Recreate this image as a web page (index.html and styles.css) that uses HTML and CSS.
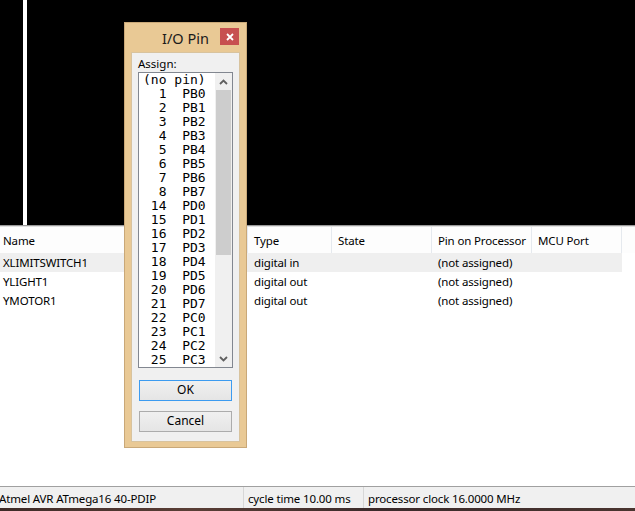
FILE: index.html
```html
<!DOCTYPE html>
<html>
<head>
<meta charset="utf-8">
<link rel="stylesheet" href="styles.css">
</head>
<body>
<div class="app">
  <div class="canvas"><div class="vline"></div></div>
  <div class="table">
    <div class="row head">
      <div class="cell">Name</div>
      <div class="cell">Type</div>
      <div class="cell">State</div>
      <div class="cell">Pin on Processor</div>
      <div class="cell">MCU Port</div>
      <div class="cell"></div>
    </div>
    <div class="row sel">
      <div class="cell">XLIMITSWITCH1</div>
      <div class="cell">digital in</div>
      <div class="cell"></div>
      <div class="cell">(not assigned)</div>
      <div class="cell"></div>
    </div>
    <div class="row">
      <div class="cell">YLIGHT1</div>
      <div class="cell">digital out</div>
      <div class="cell"></div>
      <div class="cell">(not assigned)</div>
      <div class="cell"></div>
    </div>
    <div class="row">
      <div class="cell">YMOTOR1</div>
      <div class="cell">digital out</div>
      <div class="cell"></div>
      <div class="cell">(not assigned)</div>
      <div class="cell"></div>
    </div>
  </div>
  <div class="status">
    <div class="sp sp1">Atmel AVR ATmega16 40-PDIP</div>
    <div class="sp sp2">cycle time 10.00 ms</div>
    <div class="sp sp3">processor clock 16.0000 MHz</div>
  </div>
  <div class="desk"></div>

  <div class="dialog">
    <div class="titlebar">
      <div></div>
      <div class="title">I/O Pin</div>
      <div class="closewrap"><div class="close">
        <svg width="8" height="8" viewBox="0 0 8 8"><path d="M1 1 L7 7 M7 1 L1 7" stroke="#fff" stroke-width="1.8"/></svg>
      </div></div>
    </div>
    <div class="panel">
      <div class="label">Assign:</div>
      <div class="listbox">
        <pre class="items">(no pin)
  1  PB0
  2  PB1
  3  PB2
  4  PB3
  5  PB4
  6  PB5
  7  PB6
  8  PB7
 14  PD0
 15  PD1
 16  PD2
 17  PD3
 18  PD4
 19  PD5
 20  PD6
 21  PD7
 22  PC0
 23  PC1
 24  PC2
 25  PC3</pre>
        <div class="sbar">
          <div class="sbtn"><svg width="9" height="6" viewBox="0 0 9 6"><path d="M1 5 L4.5 1.5 L8 5" fill="none" stroke="#606060" stroke-width="1.8"/></svg></div>
          <div class="strack"><div class="thumb"></div></div>
          <div class="sbtn"><svg width="9" height="6" viewBox="0 0 9 6"><path d="M1 1 L4.5 4.5 L8 1" fill="none" stroke="#606060" stroke-width="1.8"/></svg></div>
        </div>
      </div>
      <div class="btn ok">OK</div>
      <div class="btn cancel">Cancel</div>
    </div>
  </div>
</div>
</body>
</html>
```
FILE: styles.css
```css
html, body { margin: 0; padding: 0; }
body {
  width: 635px; height: 511px; overflow: hidden;
  font-family: "Noto Sans", "Open Sans", sans-serif;
  font-size: 11.5px; letter-spacing: -0.15px; color: #000; background: #fff;
}
.app { position: relative; display: flex; flex-direction: column; height: 511px; }
.canvas { height: 225px; background: #000; display: flex; }
.vline { width: 4px; margin-left: 23px; background: #fff; }
.table {
  flex: 1; background: #fff;
  border-top: 1px solid #9a9a9a;
  box-shadow: inset 0 1px 0 #e0e0e0;
}
.row {
  display: grid;
  grid-template-columns: 248px 84px 100px 100px 90px;
  height: 19px; align-items: center;
}
.row .cell { padding-left: 6px; white-space: nowrap; }
.row .cell:first-child { padding-left: 3px; }
.head {
  grid-template-columns: 248px 84px 100px 100px 90px 1fr;
  height: 26px; margin-top: 1px; background: #fdfdfd;
}
.head .cell { height: 26px; line-height: 27px; border-right: 1px solid #e5e9ee; box-sizing: border-box; }
.head .cell:last-child { border-right: none; }
.sel { width: 622px; background: #efefef; }
.status {
  height: 21px; border-top: 1px solid #a0a0a0; background: #f0f0f0;
  display: flex; align-items: stretch;
}
.sp { height: 21px; padding-top: 2px; line-height: 19px; box-sizing: border-box; white-space: nowrap; }
.sp1 { width: 245px; margin-left: -1px; border-right: 1px solid #d7d7d7; }
.sp2 { width: 120px; padding-left: 4px; border-right: 1px solid #d7d7d7; }
.sp3 { padding-left: 4px; }
.desk { height: 3px; background: linear-gradient(90deg, #3d2a27, #5a3e36 30%, #3a2a2a 60%, #4a3530); }

.dialog {
  position: absolute; left: 124px; top: 22px;
  width: 123px; height: 426px; box-sizing: border-box;
  background: #e9c995; border: 1px solid #c9a878;
  display: flex; flex-direction: column;
  letter-spacing: 0;
}
.titlebar {
  height: 29px; display: grid; grid-template-columns: 1fr auto 1fr; align-items: start;
}
.title { font-size: 14.5px; line-height: 30px; color: #1a1a1a; }
.closewrap { display: flex; justify-content: flex-end; padding-top: 5px; padding-right: 7px; }
.close {
  width: 19px; height: 17px; background: #c75050;
  display: flex; align-items: center; justify-content: center;
}
.panel {
  margin: 0 6px; height: 390px; box-sizing: border-box;
  background: #f0f0f0; border: 1px solid #d8c39e;
  padding: 2px 0 0 6px;
}
.label { height: 17px; line-height: 17px; }
.listbox {
  width: 95px; height: 296px; box-sizing: border-box;
  border: 1px solid #828790; background: #fff; display: flex;
}
.items {
  flex: 1; margin: 0; padding-left: 4px;
  font-family: "DejaVu Sans Mono", "Liberation Mono", monospace;
  font-size: 13px; line-height: 14px; color: #000; overflow: hidden;
}
.sbar { width: 17px; display: flex; flex-direction: column; background: #f0f0f0; }
.sbtn { height: 17px; display: flex; align-items: center; justify-content: center; }
.strack { flex: 1; display: flex; flex-direction: column; }
.thumb { height: 165px; margin: 0 1px; background: #cdcdcd; }
.btn {
  width: 93px; height: 21px; box-sizing: border-box; margin-left: 1px;
  background: linear-gradient(#f0f0f0, #e5e5e5);
  border: 1px solid #acacac; text-align: center; line-height: 18px; font-size: 12px;
}
.ok { margin-top: 12px; border-color: #3c9bf0; }
.cancel { margin-top: 10px; }
```
